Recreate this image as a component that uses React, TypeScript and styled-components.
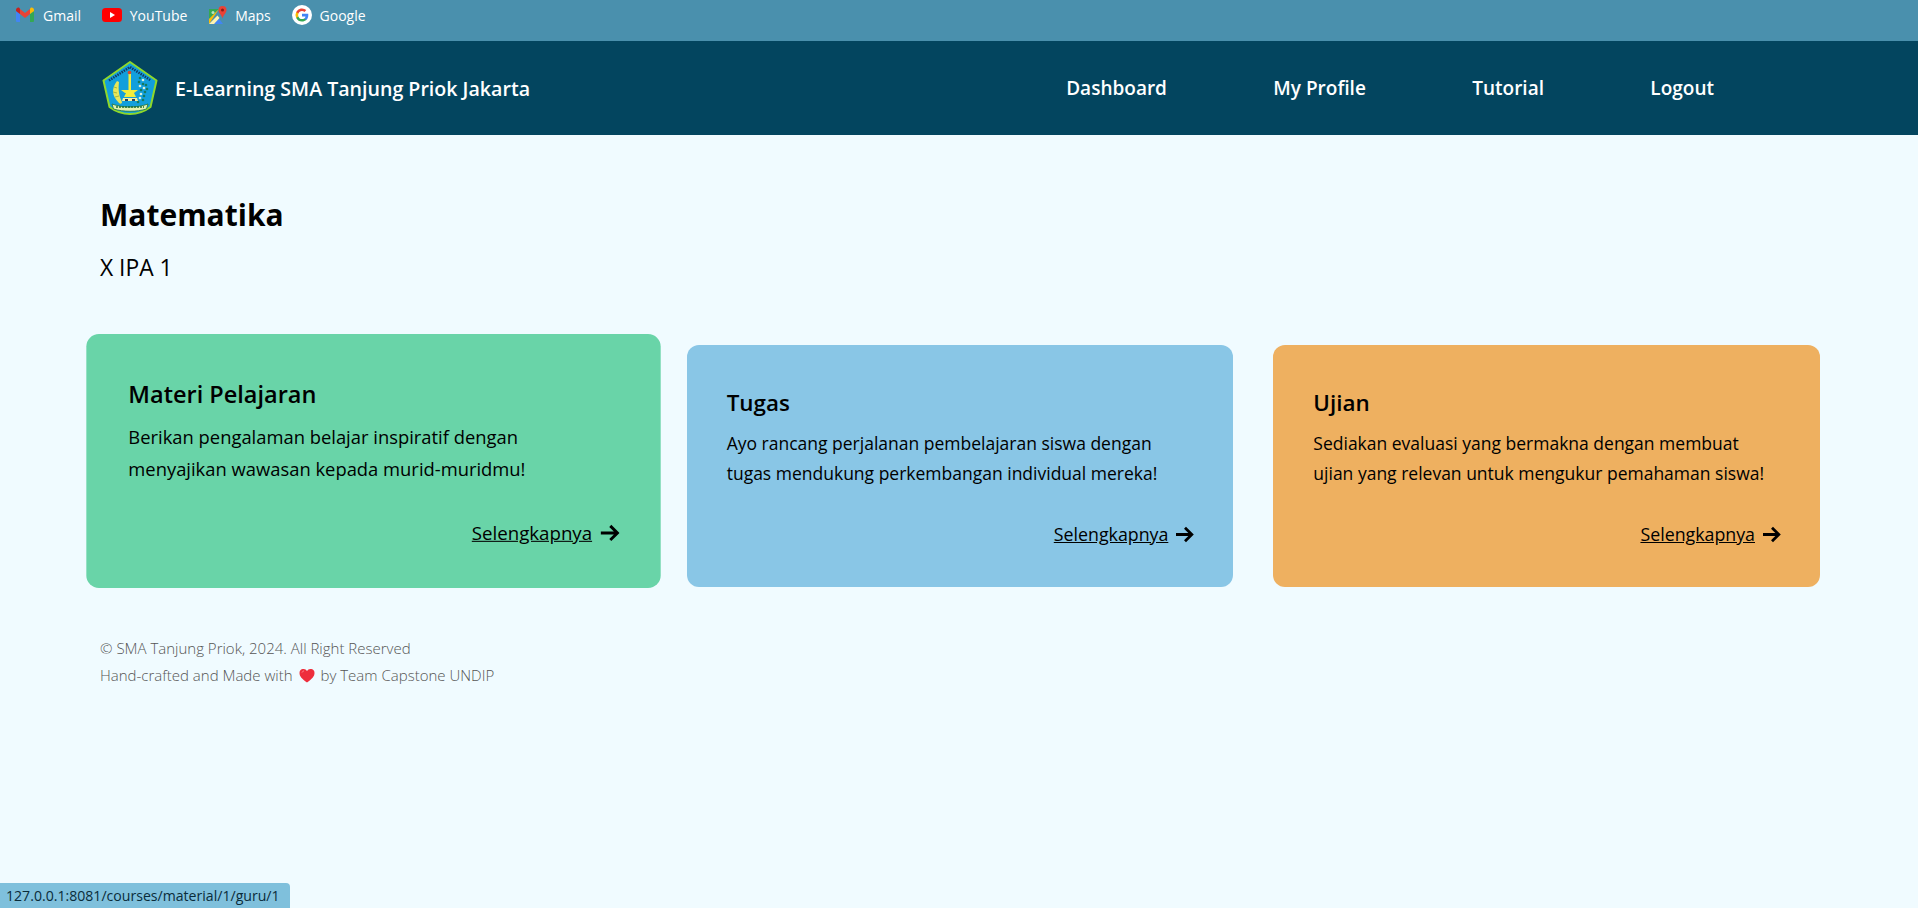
import styled, { createGlobalStyle } from 'styled-components'

const GlobalStyle = createGlobalStyle`
    * {
        box-sizing: border-box;
    }
    html, body {
        margin: 0;
        padding: 0;
        background: #f0fbff;
        font-family: "Open Sans", "Noto Sans", sans-serif;
        color: #000;
    }
`

interface CardData {
    title: string;
    lines: string[];
    color: string;
    active?: boolean;
}

const cards: CardData[] = [
    {
        title: 'Materi Pelajaran',
        lines: ['Berikan pengalaman belajar inspiratif dengan', 'menyajikan wawasan kepada murid-muridmu!'],
        color: '#69d4a8',
        active: true,
    },
    {
        title: 'Tugas',
        lines: ['Ayo rancang perjalanan pembelajaran siswa dengan', 'tugas mendukung perkembangan individual mereka!'],
        color: '#89c6e6',
    },
    {
        title: 'Ujian',
        lines: ['Sediakan evaluasi yang bermakna dengan membuat', 'ujian yang relevan untuk mengukur pemahaman siswa!'],
        color: '#eeb060',
    },
]

const GmailIcon = () => (
    <svg width="20" height="16" viewBox="0 0 20 16">
        <path d="M1 15V4l4 3v8H2a1 1 0 0 1-1-1z" fill="#4285f4" />
        <path d="M15 15V7l4-3v10a1 1 0 0 1-1 1z" fill="#34a853" />
        <path d="M5 7V2l5 4 5-4v5l-5 4z" fill="#ea4335" />
        <path d="M1 4V3c0-2 2-3 3.500-2L5 2v5z" fill="#c5221f" />
        <path d="M15 7V2l.5-1C17 0 19 1 19 3v1z" fill="#fbbc04" />
    </svg>
)

const YoutubeIcon = () => (
    <svg width="20" height="14" viewBox="0 0 20 14">
        <rect width="20" height="14" rx="3.500" fill="#ff0000" />
        <path d="M8 4l5 3-5 3z" fill="#fff" />
    </svg>
)

const MapsIcon = () => (
    <svg width="19" height="19" viewBox="0 0 19 19">
        <path d="M1 3h10L1 13z" fill="#34a853" />
        <path d="M11 3L1 13v5z" fill="#fbbc04" />
        <path d="M9 10l6 8H2z" fill="#4285f4" />
        <path d="M1 18l8.500-8.500 2 2.500L6 18z" fill="#fff3b0" />
        <path d="M14.500 0a4 4 0 0 1 4 4c0 3-3 4.500-4 8.500-1-4-4-5.500-4-8.500a4 4 0 0 1 4-4z" fill="#ea4335" />
        <circle cx="14.500" cy="4" r="1.500" fill="#8c1d18" />
        <circle cx="5" cy="6.500" r="1.500" fill="#b7e4c0" />
    </svg>
)

const GoogleIcon = () => (
    <svg width="20" height="20" viewBox="0 0 20 20">
        <circle cx="10" cy="10" r="10" fill="#fff" />
        <path d="M16.300 10.200c0-.5 0-1-.1-1.400H10v2.700h3.500a3 3 0 0 1-1.300 2v1.600h2.100c1.200-1.100 2-2.800 2-4.900z" fill="#4285f4" />
        <path d="M10 16.600c1.800 0 3.200-.6 4.300-1.500l-2.100-1.600c-.6.400-1.300.6-2.200.6-1.700 0-3.100-1.100-3.600-2.700H4.200v1.600a6.500 6.500 0 0 0 5.800 3.600z" fill="#34a853" />
        <path d="M6.400 11.400a3.900 3.900 0 0 1 0-2.800V7H4.200a6.500 6.500 0 0 0 0 6z" fill="#fbbc04" />
        <path d="M10 6c.9 0 1.800.3 2.500.9l1.800-1.800A6.500 6.500 0 0 0 4.200 7l2.200 1.600C6.900 7.100 8.300 6 10 6z" fill="#ea4335" />
    </svg>
)

const rightLeaves = [
    [38, 17], [41, 19], [37, 21], [41, 23], [44, 24], [38, 25], [42, 27], [45, 28], [39, 29],
    [43, 31], [39, 33], [42, 35], [38, 37], [41, 39], [36, 41],
]

const SchoolLogo = () => (
    <svg width="56" height="54" viewBox="0 0 56 54">
        <path d="M28 1L54.500 19.500 48.500 46c-6 4.500-14 7-20.500 7S13.500 50.500 7.500 46L1.500 19.500z" fill="#129fdc" stroke="#8fd82a" strokeWidth="2" strokeLinejoin="round" />
        <path d="M7 19.500L28 6l21 13.500" fill="none" stroke="#123a66" strokeWidth="2.500" strokeDasharray="1.500 1" />
        <path d="M15 20c-6 8-5 15 2 22 1 1 3 1 3-1-3-6-4-12-3-20z" fill="#e8e65a" />
        <path d="M12 26l3 1M11 31l4 1M13 36l4-1" stroke="#a9b83a" strokeWidth="1" />
        {rightLeaves.map(([x, y]) => (
            <circle key={`${x}-${y}`} cx={x} cy={y} r="1.300" fill={(x + y) % 3 === 0 ? '#d8f0dc' : '#157a5e'} />
        ))}
        <rect x="26.500" y="13" width="2.500" height="16" fill="#f2ee3c" />
        <circle cx="27.500" cy="11.500" r="1.800" fill="#d8452e" />
        <path d="M19 29h17l-4 3H23z" fill="#f2ee3c" />
        <path d="M24 32h8l2 4H22z" fill="#f2ee3c" />
        <path d="M21 37h14l1 3H20z" fill="#f4f2a0" />
        <path d="M23 38h3v2h-3zM30 38h3v2h-3z" fill="#26405c" />
        <path d="M10 43c11 4 25 4 36 0l-1.500 5c-10 3-23 3-33 0z" fill="#e4f2b0" stroke="#1b6f3a" strokeWidth=".8" />
        <path d="M14 46h28" stroke="#1b6f3a" strokeWidth="1.500" strokeDasharray="2 1" />
    </svg>
)

const ArrowIcon = () => (
    <svg width="19" height="17" viewBox="0 0 19 17">
        <path d="M1 8.500h15.500M10 1.800l6.800 6.700-6.800 6.700" fill="none" stroke="#000" strokeWidth="2.800" />
    </svg>
)

const HeartIcon = () => (
    <svg width="16" height="15" viewBox="0 0 16 15">
        <path d="M8 14.500C3 11 .5 8.300.5 5A4 4 0 0 1 8 3a4 4 0 0 1 7.500 2c0 3.300-2.500 6-7.500 9.500z" fill="#ee2e3c" />
        <path d="M3 4.500C3.500 3.500 4 3 5 3" fill="none" stroke="#ff8a90" strokeWidth="1" />
    </svg>
)

const App = () => (
    <>
        <GlobalStyle />
        <BookmarkBar>
            <Bookmark><GmailIcon />Gmail</Bookmark>
            <Bookmark><YoutubeIcon />YouTube</Bookmark>
            <Bookmark><MapsIcon />Maps</Bookmark>
            <Bookmark><GoogleIcon />Google</Bookmark>
        </BookmarkBar>
        <Navbar>
            <Brand>
                <SchoolLogo />
                <BrandName>E-Learning SMA Tanjung Priok Jakarta</BrandName>
            </Brand>
            <NavLinks>
                <NavLink href="#">Dashboard</NavLink>
                <NavLink href="#">My Profile</NavLink>
                <NavLink href="#">Tutorial</NavLink>
                <NavLink href="#">Logout</NavLink>
            </NavLinks>
        </Navbar>
        <Main>
            <CourseTitle>Matematika</CourseTitle>
            <ClassName>X IPA 1</ClassName>
            <CardGrid>
                {cards.map((card) => (
                    <Card key={card.title} $color={card.color} $active={card.active}>
                        <CardTitle>{card.title}</CardTitle>
                        <CardBody>
                            {card.lines.map((line) => (
                                <div key={line}>{line}</div>
                            ))}
                        </CardBody>
                        <CardFooter>
                            <MoreLink href="#">Selengkapnya</MoreLink>
                            <ArrowIcon />
                        </CardFooter>
                    </Card>
                ))}
            </CardGrid>
            <Footer>
                <div>© SMA Tanjung Priok, 2024. All Right Reserved</div>
                <FooterLine>
                    Hand-crafted and Made with <HeartIcon /> by Team Capstone UNDIP
                </FooterLine>
            </Footer>
        </Main>
        <StatusBubble>127.0.0.1:8081/courses/material/1/guru/1</StatusBubble>
    </>
)

export default App

const BookmarkBar = styled.div`
    height: 41px;
    padding: 0 0 11px 15px;
    display: flex;
    align-items: center;
    gap: 20.800px;
    background-color: #4a90ad;
`

const Bookmark = styled.div`
    display: flex;
    align-items: center;
    gap: 8px;
    font-size: 14px;
    color: #fff;
`

const Navbar = styled.nav`
    height: 94px;
    padding: 0 0 0 102px;
    display: flex;
    align-items: center;
    justify-content: space-between;
    background-color: #03455f;
`

const Brand = styled.div`
    display: flex;
    align-items: center;
    gap: 17px;
`

const BrandName = styled.span`
    font-size: 19.600px;
    font-weight: 600;
    color: #fff;
`

const NavLinks = styled.div`
    display: flex;
    gap: 106.400px;
    padding-right: 204px;
`

const NavLink = styled.a`
    font-size: 19px;
    font-weight: 600;
    color: #fff;
    text-decoration: none;
`

const Main = styled.main`
    padding: 58px 98px 0 100px;
`

const CourseTitle = styled.h1`
    margin: 0;
    font-size: 30px;
    font-weight: 700;
    line-height: 44px;
`

const ClassName = styled.div`
    margin-top: 15px;
    font-size: 22.800px;
    line-height: 32px;
`

const CardGrid = styled.div`
    margin-top: 61px;
    display: grid;
    grid-template-columns: repeat(3, 1fr);
    gap: 40px;
`

const Card = styled.section<{ $color: string; $active?: boolean }>`
    height: 242px;
    padding: 41px 39px 0 40px;
    border-radius: 12px;
    background-color: ${(p) => p.$color};
    transform: ${(p) => (p.$active ? 'translateY(-5px) scale(1.05)' : 'none')};
`

const CardTitle = styled.h2`
    margin: 0;
    font-size: 22.400px;
    font-weight: 600;
    line-height: 34px;
`

const CardBody = styled.div`
    margin-top: 8px;
    font-size: 17.500px;
    line-height: 30px;
`

const CardFooter = styled.div`
    margin-top: 34px;
    display: flex;
    justify-content: flex-end;
    align-items: center;
    gap: 7px;
`

const MoreLink = styled.a`
    font-size: 17.800px;
    line-height: 24px;
    color: #000;
    text-decoration: underline;
`

const Footer = styled.footer`
    margin-top: 48px;
    font-size: 15px;
    font-weight: 300;
    line-height: 27px;
    color: #555;
`

const FooterLine = styled.div`
    display: flex;
    align-items: center;
    gap: 6px;
`

const StatusBubble = styled.div`
    position: fixed;
    left: 0;
    bottom: 0;
    width: 290px;
    height: 25px;
    padding-left: 6px;
    display: flex;
    align-items: center;
    border-top-right-radius: 4px;
    background-color: #7fc0dc;
    font-size: 14.100px;
    color: #0a2c3a;
`
